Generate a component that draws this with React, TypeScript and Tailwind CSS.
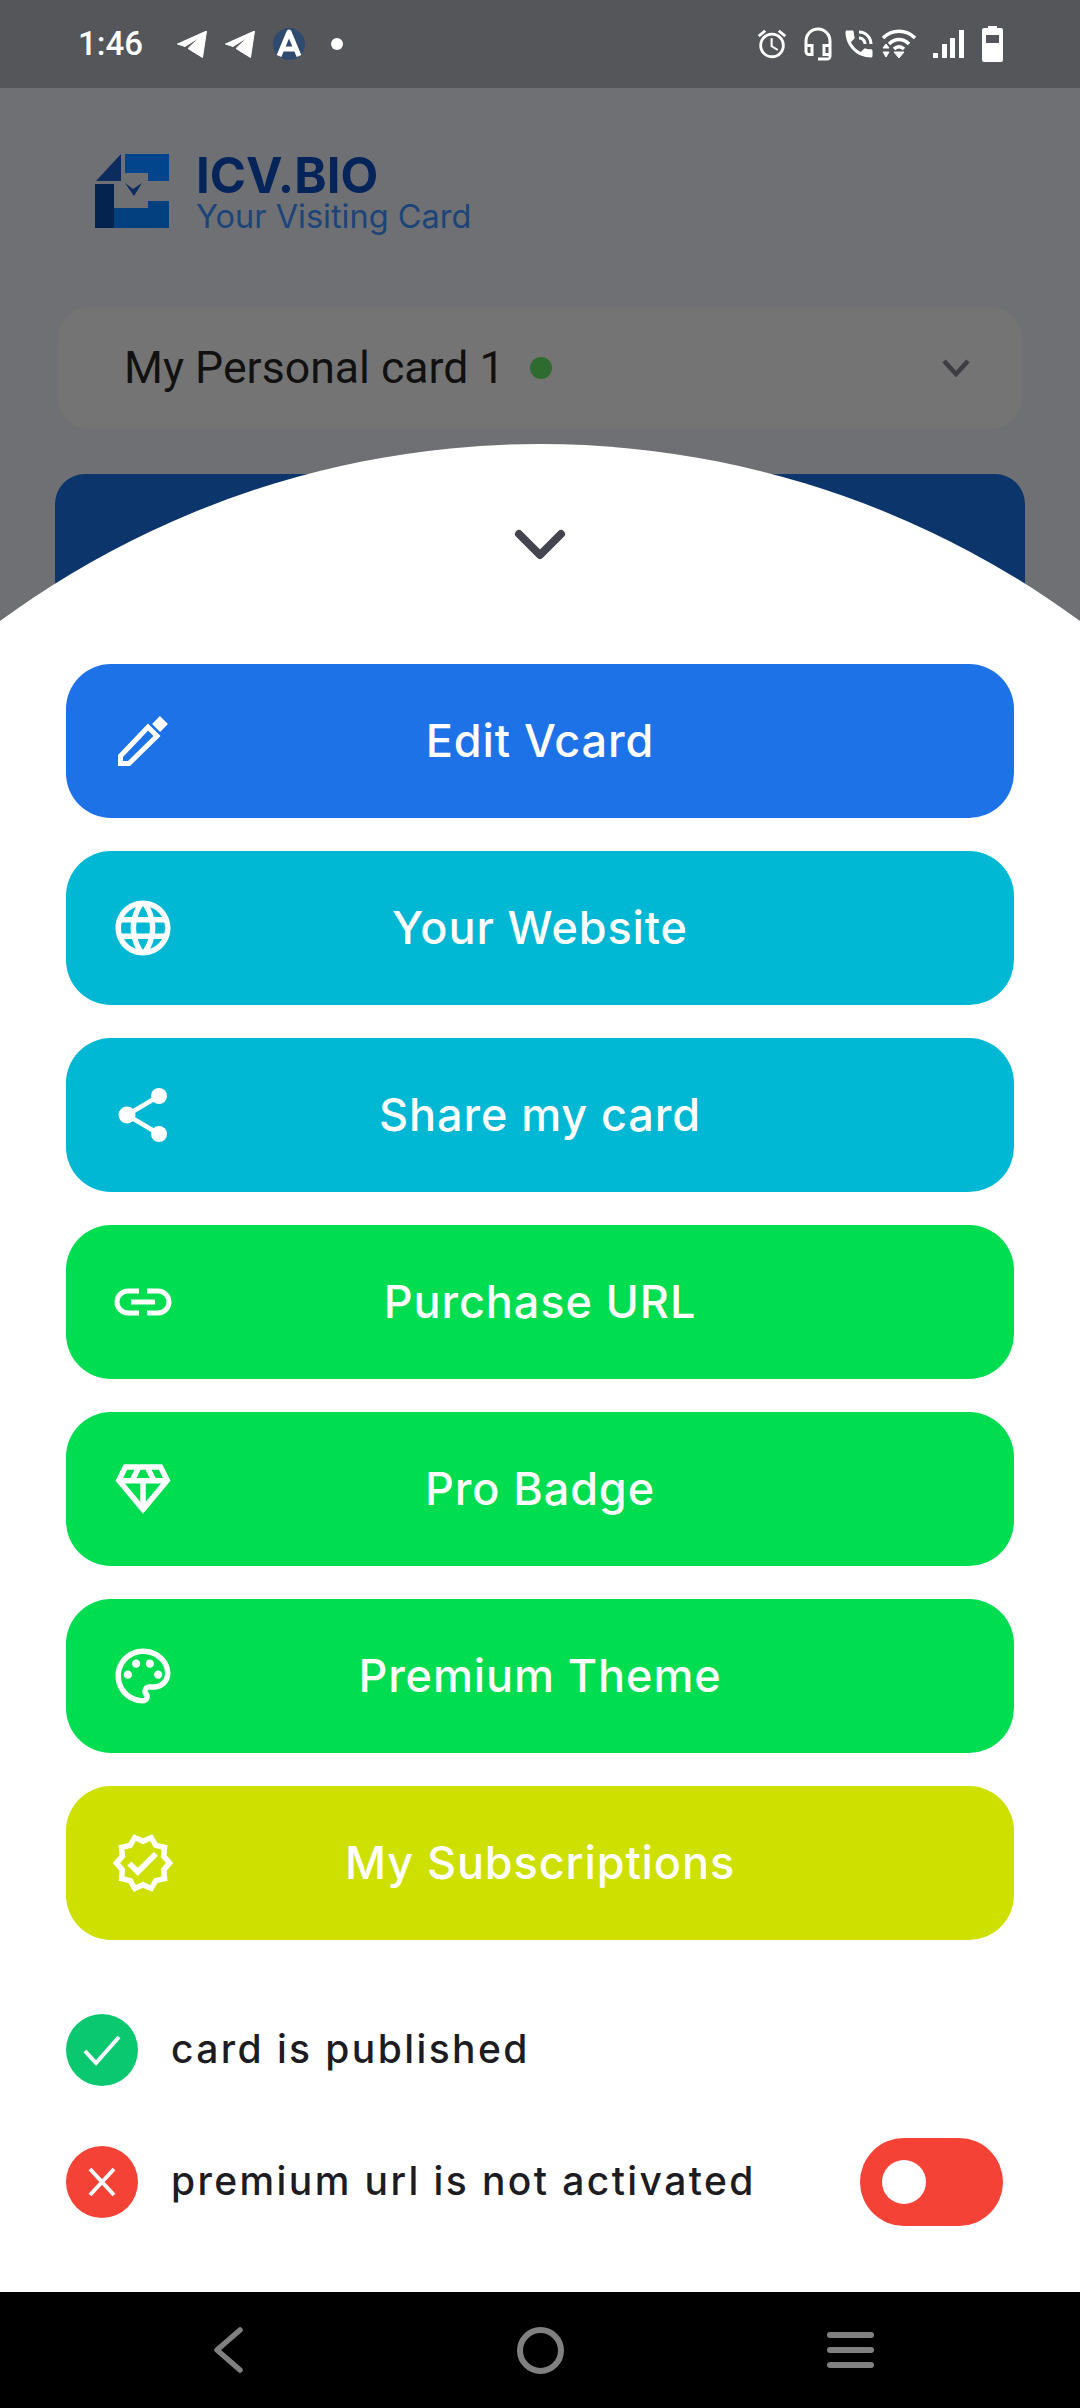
import { ReactNode } from 'react';
import {
  MdLanguage,
  MdOutlineAccessAlarm,
  MdOutlineDiamond,
  MdOutlineHeadsetMic,
  MdOutlinePalette,
  MdOutlineVerified,
  MdPhoneInTalk,
} from 'react-icons/md';

interface ActionButton {
  label: string;
  bg: string;
  icon: ReactNode;
}

const PencilIcon = () => (
  <svg width="60" height="60" viewBox="0 0 60 60" fill="none">
    <path d="M7.5 45 L35 16 L44 25 L16 52.5 L7.5 52.5 Z" stroke="white" strokeWidth="5" strokeLinejoin="miter" />
    <path d="M43 9 L51 17" stroke="white" strokeWidth="11" />
  </svg>
);

const ShareIcon = () => (
  <svg width="60" height="60" viewBox="0 0 60 60" fill="white">
    <path d="M14 30 L46 11 M14 30 L46 49" stroke="white" strokeWidth="4.5" />
    <circle cx="46" cy="11" r="8" />
    <circle cx="14" cy="30" r="8.5" />
    <circle cx="46" cy="49" r="8" />
  </svg>
);

const LinkIcon = () => (
  <svg width="60" height="60" viewBox="0 0 60 60" fill="none" stroke="white" strokeWidth="5">
    <path d="M26 19 H15 a11 11 0 0 0 0 22 H26" />
    <path d="M34 19 H45 a11 11 0 0 1 0 22 H34" />
    <path d="M18 30 H42" />
  </svg>
);

const TelegramIcon = () => (
  <svg width="30" height="27" viewBox="0 0 30 27" fill="white">
    <path d="M0.5 13 L29.5 0 L25.5 26.5 L15 20 L11 17.5 L23 6 L8 15.5 Z" strokeLinejoin="round" stroke="white" strokeWidth="1" />
  </svg>
);

const actions: ActionButton[] = [
  { label: 'Edit Vcard', bg: 'bg-[#1e72e8]', icon: <PencilIcon /> },
  { label: 'Your Website', bg: 'bg-[#00b8d4]', icon: <MdLanguage size={66} color="white" className="-m-[3px]" /> },
  { label: 'Share my card', bg: 'bg-[#00b8d4]', icon: <ShareIcon /> },
  { label: 'Purchase URL', bg: 'bg-[#00dd50]', icon: <LinkIcon /> },
  { label: 'Pro Badge', bg: 'bg-[#00dd50]', icon: <MdOutlineDiamond size={66} color="white" className="-m-[3px]" /> },
  { label: 'Premium Theme', bg: 'bg-[#00dd50]', icon: <MdOutlinePalette size={66} color="white" className="-m-[3px]" /> },
  { label: 'My Subscriptions', bg: 'bg-[#cde000]', icon: <MdOutlineVerified size={66} color="white" className="-m-[3px]" /> },
];

function StatusBar() {
  return (
    <div className="h-[88px] shrink-0 bg-[#55565a] flex items-center text-white">
      <span className="ml-[78px] w-[99px] text-[33px] font-medium [font-family:Roboto,sans-serif]">1:46</span>
      <TelegramIcon />
      <span className="ml-[18px]"><TelegramIcon /></span>
      <svg className="ml-[18px]" width="32" height="32" viewBox="0 0 32 32" fill="none">
        <circle cx="16" cy="16" r="16" fill="#2e4a6e" />
        <path d="M6 28 L16 4 L26 28 M10 21 H22" stroke="white" strokeWidth="5" strokeLinejoin="round" />
      </svg>
      <span className="ml-[26px] w-[12px] h-[12px] rounded-full bg-white" />

      <div className="ml-auto mr-[77px] flex items-center">
        <MdOutlineAccessAlarm size={34} color="white" />
        <MdOutlineHeadsetMic size={36} color="white" className="ml-[11px]" />
        <MdPhoneInTalk size={36} color="white" className="ml-[5px]" />
        <svg className="ml-[5px]" width="34" height="30" viewBox="0 0 34 30" fill="none" stroke="white" strokeWidth="3.5">
          <path d="M1 9 C10 0 24 0 33 9" />
          <path d="M7 15 C13 9 21 9 27 15" />
          <path d="M12 20 C15 17 19 17 22 20" />
          <path d="M12 23 H22 L17 29 Z" fill="white" strokeWidth="1" />
          <path d="M1 19 L4 15 L7 19 Z M1 23 L4 28 L7 23 Z" fill="white" strokeWidth="1" />
        </svg>
        <svg className="ml-[17px]" width="31" height="28" viewBox="0 0 31 28" fill="white">
          <rect x="0" y="23" width="5" height="5" />
          <rect x="9" y="14" width="5" height="14" />
          <rect x="17" y="8" width="5" height="20" />
          <rect x="26" y="0" width="5" height="28" />
        </svg>
        <svg className="ml-[18px]" width="21" height="36" viewBox="0 0 21 36">
          <path
            fillRule="evenodd"
            fill="white"
            d="M6 0 H15 V2 H19 a2 2 0 0 1 2 2 V34 a2 2 0 0 1 -2 2 H2 a2 2 0 0 1 -2 -2 V4 a2 2 0 0 1 2 -2 H6 Z M4 9 V17 H17 V9 Z"
          />
        </svg>
      </div>
    </div>
  );
}

function BackgroundPage() {
  return (
    <div className="h-full bg-[#6f7073]">
      <div className="pt-[66px] pl-[95px] flex items-start h-[219px]">
        <svg width="75" height="75" viewBox="0 0 75 75">
          <path d="M1 27 L26 0 V27 Z" fill="#0d2c5e" />
          <path d="M30 0 H74 V27 H53 V19 H30 Z" fill="#03458c" />
          <path d="M0 30 H19 V74 H0 Z" fill="#04234f" />
          <path d="M19 54 H53 V47 H74 V74 H19 Z" fill="#03407f" />
          <path d="M30 29 L38 35 L47 29 L39 42 Z" fill="#0d2c5e" />
        </svg>
        <div className="ml-[26px] -mt-[3px] [font-family:Inter,sans-serif]">
          <div className="text-[49px] leading-[50px] font-bold text-[#04245a]">ICV.BIO</div>
          <div className="text-[32.5px] leading-[32px] text-[#1b4478]">Your Visiting Card</div>
        </div>
      </div>

      <div className="mx-[58px] h-[122px] rounded-[30px] bg-[#747474] flex items-center pl-[66px] pr-[52px]">
        <span className="text-[44.6px] text-[#111] [font-family:Roboto,sans-serif]">My Personal card 1</span>
        <span className="ml-[25px] w-[22px] h-[22px] rounded-full bg-[#2e6b2e]" />
        <svg className="ml-auto" width="28" height="18" viewBox="0 0 28 18" fill="none">
          <path d="M2 2 L14 15 L26 2" stroke="#3c3c42" strokeWidth="4.5" />
        </svg>
      </div>

      <div className="mt-[45px] mx-[55px] h-[400px] rounded-[30px] bg-[#0c356b]" />
    </div>
  );
}

function Sheet() {
  return (
    <div className="absolute inset-x-0 top-[356px] bottom-0 overflow-hidden">
      {/* curved top edge of the sheet */}
      <div className="absolute left-[-372px] top-0 w-[1824px] h-[1824px] rounded-full bg-white" />
      <div className="absolute inset-x-0 top-[600px] bottom-0 bg-white" />
      <div className="relative px-[66px] pt-[84px]">
        <div className="flex justify-center">
          <svg width="52" height="32" viewBox="0 0 52 32" fill="none">
            <path d="M5 6 L26 27 L47 6" stroke="#44444f" strokeWidth="8" strokeLinecap="round" strokeLinejoin="round" />
          </svg>
        </div>

        <div className="mt-[104px] flex flex-col gap-[33px]">
          {actions.map((action) => (
            <div
              key={action.label}
              className={`${action.bg} h-[154px] rounded-[45px] pl-[47px] pr-[107px] flex items-center text-white`}
            >
              <span className="w-[60px] h-[60px] flex items-center justify-center shrink-0">{action.icon}</span>
              <span className="flex-1 text-center text-[45px] tracking-[0.9px] font-medium [font-family:Inter,sans-serif]">
                {action.label}
              </span>
            </div>
          ))}
        </div>

        <div className="mt-[74px] flex flex-col gap-[52px] text-[#1c1c22] text-[39px] font-medium tracking-[2.4px] [font-family:Inter,sans-serif]">
          <div className="h-[72px] flex items-center">
            <span className="w-[72px] h-[72px] rounded-full bg-[#0ac870] flex items-center justify-center">
              <svg width="38" height="32" viewBox="0 0 38 32" fill="none">
                <path d="M2 17 L13 29 L36 3" stroke="white" strokeWidth="4" />
              </svg>
            </span>
            <span className="ml-[33px] -mt-[2px]">card is published</span>
          </div>
          <div className="h-[88px] flex items-center pr-[11px]">
            <span className="w-[72px] h-[72px] rounded-full bg-[#f44336] flex items-center justify-center">
              <svg width="30" height="30" viewBox="0 0 30 30" fill="none">
                <path d="M3 2 L27 28 M27 2 L3 28" stroke="white" strokeWidth="4" />
              </svg>
            </span>
            <span className="ml-[33px] -mt-[2px]">premium url is not activated</span>
            <span className="ml-auto w-[143px] h-[88px] rounded-full bg-[#f44336] flex items-center pl-[22px]">
              <span className="w-[44px] h-[44px] rounded-full bg-white" />
            </span>
          </div>
        </div>
      </div>
    </div>
  );
}

function NavBar() {
  return (
    <div className="h-[116px] shrink-0 bg-black flex items-center">
      <svg className="ml-[212px]" width="31" height="46" viewBox="0 0 31 46" fill="none">
        <path d="M28 3 L5 23 L28 43" stroke="#808080" strokeWidth="5.5" strokeLinecap="round" strokeLinejoin="round" />
      </svg>
      <span className="ml-[274px] w-[47px] h-[47px] rounded-full border-[6px] border-[#808080]" />
      <div className="ml-[263px] w-[47px] flex flex-col gap-[9px]">
        <span className="h-[6px] rounded-full bg-[#808080]" />
        <span className="h-[6px] rounded-full bg-[#808080]" />
        <span className="h-[6px] rounded-full bg-[#808080]" />
      </div>
    </div>
  );
}

export default function App() {
  return (
    <div className="w-[1080px] h-[2408px] flex flex-col overflow-hidden">
      <StatusBar />
      <div className="relative flex-1 overflow-hidden">
        <BackgroundPage />
        <Sheet />
      </div>
      <NavBar />
    </div>
  );
}
